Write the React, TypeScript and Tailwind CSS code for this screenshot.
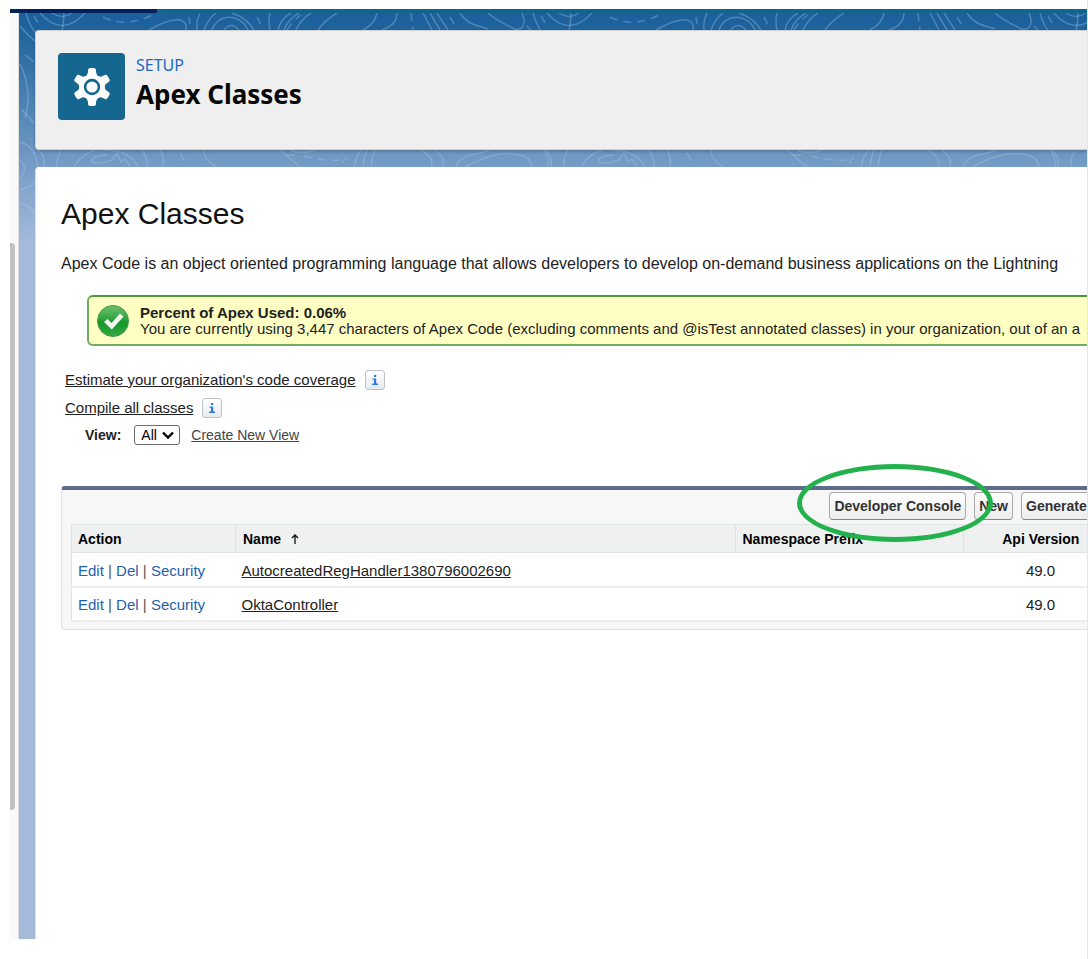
import React from "react";

const rows = [
  { name: "AutocreatedRegHandler1380796002690", version: "49.0" },
  { name: "OktaController", version: "49.0" },
];

const topLines = [
  "M20 13Q62 62 64 0",
  "M40 0Q62 25 85 0",
  "M52 0Q62 7 72 0",
  "M26 0Q30 14 36 20",
  "M149 17Q176 2 184 9Q187 12 186 17",
  "M197 17Q196 8 200 0",
  "M204 17Q208 6 216 0",
  "M232 0Q247 5 254 17",
  "M212 17C218 0 240 0 248 17",
  "M224 17Q231 8 239 17",
  "M270 17Q268 8 270 0",
  "M278 17Q280 6 291 0",
  "M284 17Q288 6 299 0",
  "M296 17Q301 6 311 0",
  "M318 17Q324 8 337 0",
  "M363 17Q375 11 377 0",
  "M382 17Q397 12 397 0",
  "M423 0L432 17",
  "M430 0L440 17",
  "M437 0L448 17",
  "M460 0C468 12 476 12 488 16",
  "M488 0C498 9 508 12 514 16Q525 18 524 6L522 0",
];

const topDashes = [
  "M34 3L40 13",
  "M103 4Q127 16 156 0",
  "M189 4L190 11",
  "M257 4L262 14",
  "M287 17Q292 8 301 2",
  "M411 0L413 17",
  "M450 4L456 14",
];

const midLines = [
  "M38 137Q45 141 44 154",
  "M61 137Q56 146 57 154",
  "M74 154Q82 140 96 137",
  "M107 142Q90 143 92 149Q98 152 112 147L117 140L121 149L125 146L130 153",
  "M104 137Q130 137 138 154",
  "M142 137Q148 145 147 154",
  "M160 137Q165 145 163 154",
  "M205 137Q201 143 216 154",
  "M280 137L300 154",
  "M290 137Q300 142 316 137",
  "M354 154Q356 144 361 137",
  "M363 154Q364 144 367 137",
  "M371 154Q372 144 375 137",
  "M421 137Q435 145 431 154",
  "M435 137Q446 145 443 154",
  "M456 154Q460 143 476 141L490 137",
  "M465 154C490 140 510 138 524 143Q531 147 532 154",
  "M544 137Q549 145 548 154",
];

const midDashes = [
  "M180 140L185 149",
  "M286 142L299 142",
  "M304 143Q322 148 340 147",
  "M342 150L350 140",
];

const sideLines = [
  "M20 51Q33 78 25 105",
  "M22 97L34 110",
  "M20 129Q36 133 38 156",
  "M20 147Q29 155 20 165",
  "M20 177Q34 174 42 162",
  "M20 190Q34 194 38 208",
];

function Contours() {
  return (
    <svg
      aria-hidden="true"
      className="absolute inset-0 h-[240px] w-full"
      fill="none"
      stroke="#a9cbe8"
      strokeOpacity="0.34"
      strokeWidth="1.5"
    >
      {[-19, 488, 995].map((x) => (
        <g key={x} transform={`translate(${x} 0)`}>
          {topLines.concat(midLines).map((d) => (
            <path key={d} d={d} />
          ))}
          {topDashes.concat(midDashes).map((d) => (
            <path key={d} d={d} strokeDasharray="8 6" />
          ))}
        </g>
      ))}
      <g transform="translate(-19 0)">
        {sideLines.map((d) => (
          <path key={d} d={d} />
        ))}
        <path d="M25 42L34 49" />
      </g>
    </svg>
  );
}

function SetupIcon() {
  return (
    <div className="flex size-[67px] shrink-0 items-center justify-center rounded bg-[#16678f]">
      <svg viewBox="-20 -20 40 40" className="size-10" aria-hidden="true">
        <g fill="#fff">
          <circle r="12.6" />
          {[0, 60, 120, 180, 240, 300].map((a) => (
            <path
              key={a}
              transform={`rotate(${a})`}
              d="M-7 -10Q-4.200 -12 -4 -15V-16.500Q-4 -19 -1.500 -19H1.500Q4 -19 4 -16.500V-15Q4.200 -12 7 -10Z"
            />
          ))}
        </g>
        <circle r="6.900" fill="#fff" stroke="#16678f" strokeWidth="2.600" />
      </svg>
    </div>
  );
}

function SuccessIcon() {
  return (
    <svg viewBox="0 0 34 34" className="size-[34px] shrink-0" aria-hidden="true">
      <defs>
        <linearGradient id="ok" x1="0" y1="0" x2="0" y2="1">
          <stop offset="0" stopColor="#6fbf74" />
          <stop offset="0.45" stopColor="#2fa33b" />
          <stop offset="0.55" stopColor="#16962a" />
          <stop offset="1" stopColor="#35a844" />
        </linearGradient>
      </defs>
      <circle cx="17" cy="17" r="15.500" fill="url(#ok)" stroke="#3f9a49" />
      <path d="M8 18L11.500 15L15.500 19L24 9.500L27.500 12.500L15.800 25.500Z" fill="#f4faf2" />
    </svg>
  );
}

function InfoButton({ label }: { label: string }) {
  return (
    <button
      type="button"
      aria-label={label}
      className="flex size-5 items-center justify-center rounded-[3px] border border-[#bfc3c8] bg-linear-to-b from-white to-[#e6eaf0]"
    >
      <svg viewBox="0 0 8 10" className="h-[10px] w-2" fill="#2f78d8" aria-hidden="true">
        <path d="M3 0h2.200v2H3zM1.500 3.400h3.700V8.600H7V10H1.200V8.600H3V4.800H1.500z" />
      </svg>
    </button>
  );
}

const toolButton =
  "h-7 rounded border border-[#a9a9a9] border-b-[#858585] bg-linear-to-b from-white to-[#ececec] px-1 text-left text-sm font-bold whitespace-nowrap text-[#333]";

const cell = "border-b-2 border-[#ececec] px-[6px] pt-1 align-middle";

export default function App() {
  return (
    <div className="min-h-screen overflow-hidden border-r border-[#e5e5e5] bg-white pt-[9px] pb-5 pl-[10px] font-['Liberation_Sans',Arial,sans-serif] text-[#222]">
      <div className="flex h-1 bg-[#0f6590]">
        <div className="w-[147px] bg-[#03205c]" />
      </div>
      <div className="flex min-h-[calc(100vh-33px)]">
        <div className="w-[9px] shrink-0 border-r border-[#dcdcdc] bg-[#f9f9f9] pt-[230px]">
          <div className="h-[567px] w-[5px] rounded-r bg-[#c1c1c1]" />
        </div>

        <div className="relative flex min-w-0 flex-1 flex-col bg-[#a5badb] bg-[linear-gradient(180deg,#1b609c_0px,#1f639d_17px,#6b96c0_137px,#769dc6_154px,#a5badb_230px)] pt-[17px] pl-4">
          <Contours />
          <header className="relative flex h-[120px] shrink-0 rounded-l border border-r-0 border-[#d0d0d0] bg-[#efefef] pt-[22px] pl-[22px] shadow-[0_2px_3px_rgba(0,0,0,0.2)]">
            <SetupIcon />
            <div className="pl-[11px] font-['Noto_Sans',sans-serif]">
              <p className="pt-[2px] text-base leading-5 text-[#2268c4]">SETUP</p>
              <p className="text-[26px] leading-[38px] font-bold text-[#080707]">Apex Classes</p>
            </div>
          </header>

          <main className="relative mt-[17px] flex-1 overflow-hidden rounded-tl border-l border-[#dddddd] bg-white pt-[27px] pl-[25px]">
            <h1 className="text-[30px] leading-10 text-[#111]">Apex Classes</h1>
            <p className="mt-5 text-base leading-5 whitespace-nowrap">
              Apex Code is an object oriented programming language that allows developers to develop on-demand business
              applications on the Lightning
            </p>

            <div className="mt-[21px] ml-[26px] flex h-[51px] items-center gap-[10px] rounded-l-md border-2 border-r-0 border-[#6fae62] border-t-[#4e9a3a] bg-[#ffffc4] pl-[7px]">
              <SuccessIcon />
              <div className="text-[15px] leading-4 whitespace-nowrap">
                <p className="font-bold">Percent of Apex Used: 0.06%</p>
                <p>
                  You are currently using 3,447 characters of Apex Code (excluding comments and @isTest annotated
                  classes) in your organization, out of an a
                </p>
              </div>
            </div>

            <div className="mt-[24px] flex flex-col gap-2 pl-1 text-[15px]">
              <div className="flex h-5 items-center gap-[9px]">
                <a href="#coverage" className="underline">Estimate your organization's code coverage</a>
                <InfoButton label="About code coverage" />
              </div>
              <div className="flex h-5 items-center gap-[9px]">
                <a href="#compile" className="underline">Compile all classes</a>
                <InfoButton label="About compiling classes" />
              </div>
            </div>

            <div className="mt-[7px] flex h-5 items-center pl-6 text-sm">
              <label htmlFor="view" className="font-bold">View:</label>
              <div className="relative ml-[13px]">
                <select
                  id="view"
                  className="h-5 w-[46px] appearance-none rounded-[3px] border border-[#6b6b6b] bg-white pl-[6px] text-sm leading-none text-black"
                >
                  <option>All</option>
                </select>
                <svg
                  viewBox="0 0 12 8"
                  className="pointer-events-none absolute top-[6px] right-[6px] h-2 w-3"
                  fill="none"
                  stroke="#000"
                  strokeWidth="2.400"
                  aria-hidden="true"
                >
                  <path d="M1 1.500L6 6.500L11 1.500" />
                </svg>
              </div>
              <a href="#new-view" className="ml-[11px] text-[#444] underline">Create New View</a>
            </div>

            <section className="mt-[41px] -mr-8 rounded border border-t-4 border-[#e2e4e4] border-t-[#5d6b8c] bg-[#f7f7f7] pb-[7px] pl-[9px]">
              <div className="flex h-[34px] justify-end gap-2 pt-[2px]">
                <div className="relative">
                  <button type="button" className={toolButton}>Developer Console</button>
                  <div className="pointer-events-none absolute -top-[28px] -left-[32px] z-10 h-[78px] w-[196px] rounded-[50%] border-5 border-[#22b14c]" />
                </div>
                <button type="button" className={toolButton}>New</button>
                <button type="button" className={`${toolButton} w-[97px]`}>Generate</button>
              </div>
              <table className="w-full table-fixed border-collapse border-l border-[#dfe3e6] bg-white text-[15px]">
                <colgroup>
                  <col className="w-[164px]" />
                  <col />
                  <col className="w-[228px]" />
                  <col className="w-[155px]" />
                </colgroup>
                <thead className="bg-[#eff1f1] text-sm text-black">
                  <tr className="h-7 border-y border-[#dfe3e6]">
                    <th className="px-[6px] text-left">Action</th>
                    <th className="border-l border-[#dfe3e6] px-[7px] text-left">
                      <span className="flex items-center gap-[10px]">
                        Name
                        <svg viewBox="0 0 8 10" className="h-[10px] w-2" fill="none" stroke="#111" strokeWidth="1.300" aria-label="Sorted ascending">
                          <path d="M4 10V1M1 4L4 1L7 4" />
                        </svg>
                      </span>
                    </th>
                    <th className="border-l border-[#dfe3e6] px-[7px] text-left">Namespace Prefix</th>
                    <th className="border-l border-[#dfe3e6] px-[7px]">Api Version</th>
                  </tr>
                </thead>
                <tbody>
                  {rows.map((r) => (
                    <tr key={r.name} className="h-[34px]">
                      <td className={`${cell} text-[#555]`}>
                        <a href="#edit" className="text-[#1f5fae]">Edit</a> |{" "}
                        <a href="#del" className="text-[#1f5fae]">Del</a> |{" "}
                        <a href="#security" className="text-[#1f5fae]">Security</a>
                      </td>
                      <td className={cell}>
                        <a href="#class" className="underline">{r.name}</a>
                      </td>
                      <td className={cell} />
                      <td className={`${cell} text-center`}>{r.version}</td>
                    </tr>
                  ))}
                </tbody>
              </table>
            </section>
          </main>
        </div>
      </div>
    </div>
  );
}
